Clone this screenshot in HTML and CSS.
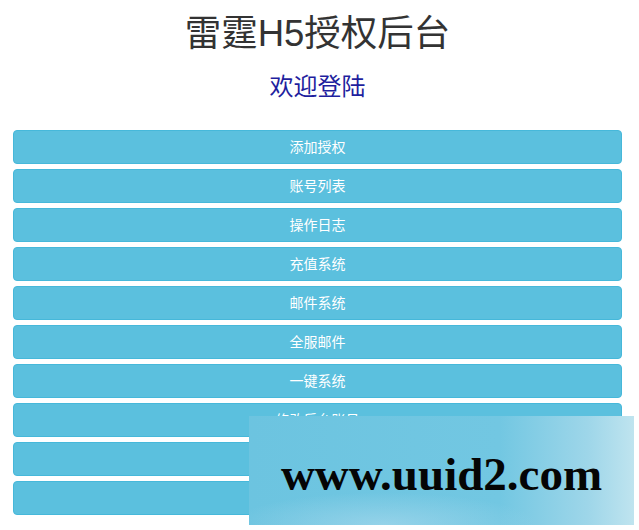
FILE: index.html
```html
<!DOCTYPE html>
<html lang="zh-CN">
<head>
<meta charset="utf-8">
<title>雷霆H5授权后台</title>
<link rel="stylesheet" href="styles.css">
</head>
<body>
<div class="page">
  <h1 class="title">雷霆H5授权后台</h1>
  <h2 class="subtitle">欢迎登陆</h2>
  <div class="menu">
    <a class="btn">添加授权</a>
    <a class="btn">账号列表</a>
    <a class="btn">操作日志</a>
    <a class="btn">充值系统</a>
    <a class="btn">邮件系统</a>
    <a class="btn">全服邮件</a>
    <a class="btn">一键系统</a>
    <a class="btn">修改后台账号</a>
    <a class="btn">修改后台密码</a>
    <a class="btn">退出登录</a>
  </div>
</div>
<div class="watermark"><span>www.uuid2.com</span></div>
</body>
</html>
```
FILE: styles.css
```css
html, body {
  margin: 0;
  padding: 0;
  background: #fff;
}
body {
  font-family: "Liberation Sans", "Noto Sans CJK SC", sans-serif;
  color: #333;
}
.page {
  margin: 0 17px 0 13px;
  padding-top: 13px;
}
.title {
  margin: 0;
  font-size: 36.5px;
  font-weight: normal;
  line-height: 42px;
  text-align: center;
  color: #333;
}
.subtitle {
  margin: 19px 0 0;
  font-size: 24px;
  font-weight: normal;
  line-height: 26px;
  text-align: center;
  color: #1f1f9e;
}
.menu {
  margin-top: 30px;
  display: flex;
  flex-direction: column;
  gap: 5px;
}
.btn {
  display: block;
  box-sizing: border-box;
  height: 34px;
  line-height: 20px;
  padding: 6px 12px;
  font-size: 14px;
  color: #fff;
  text-align: center;
  background: #5bc0de;
  border: 1px solid #46b8da;
  border-radius: 4px;
}
.watermark {
  position: absolute;
  left: 249px;
  top: 416px;
  width: 385px;
  height: 109px;
  box-sizing: border-box;
  padding-top: 6px;
  display: flex;
  align-items: center;
  justify-content: center;
  background:
    radial-gradient(ellipse 40% 30% at 35% 100%, rgba(165, 216, 236, 0.7), rgba(165, 216, 236, 0) 100%),
    linear-gradient(to right, #6cc4e0 0%, #72c7e2 65%, #9ed6e9 88%, #bfe4ef 100%);
}
.watermark span {
  font-family: "Liberation Serif", serif;
  font-weight: bold;
  font-size: 47px;
  color: #050505;
}
```
